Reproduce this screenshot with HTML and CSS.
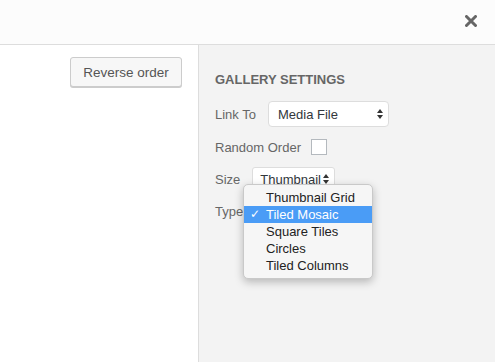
FILE: index.html
```html
<!DOCTYPE html>
<html lang="en">
<head>
	<meta charset="UTF-8">
	<title>Gallery settings</title>
	<link rel="stylesheet" href="styles.css">
</head>
<body>
	<div class="header">
		<button class="close" type="button">
			<svg width="12" height="12" viewBox="0 0 12 12"><path d="M1.5 1.5L10.5 10.5M10.5 1.5L1.5 10.5" stroke="#666" stroke-width="3" stroke-linecap="round"/></svg>
		</button>
	</div>

	<div class="main">
		<div class="content">
			<button class="btn" type="button">Reverse order</button>
		</div>

		<div class="sidebar">
			<h2 class="title">Gallery Settings</h2>

			<div class="row row-link">
				<span class="label">Link To</span>
				<div class="select select-link">Media File<span class="arrows"></span></div>
			</div>

			<div class="row row-random">
				<span class="label">Random Order</span>
				<span class="check"></span>
			</div>

			<div class="row row-size">
				<span class="label">Size</span>
				<div class="select select-size">Thumbnail<span class="arrows"></span></div>
			</div>

			<div class="row row-type">
				<span class="label">Type</span>
			</div>

			<ul class="menu">
				<li>Thumbnail Grid</li>
				<li class="active">Tiled Mosaic</li>
				<li>Square Tiles</li>
				<li>Circles</li>
				<li>Tiled Columns</li>
			</ul>
		</div>
	</div>
</body>
</html>
```

FILE: styles.css
```css
*{
	padding: 0;
	margin: 0;
	box-sizing: border-box;
	list-style: none;
}
html,body{
	height: 100%;
}
body{
	font-family: "Liberation Sans", Arial, sans-serif;
	font-size: 13px;
	color: #555;
	background: #fff;
	display: flex;
	flex-direction: column;
}
.header{
	height: 45px;
	background: #fcfcfc;
	border-bottom: 1px solid #ddd;
	display: flex;
	justify-content: flex-end;
	align-items: center;
	padding-right: 18px;
	flex-shrink: 0;
}
.close{
	border: 0;
	background: none;
	width: 12px;
	height: 12px;
	display: flex;
	margin-top: -3px;
}
.main{
	flex: 1;
	display: flex;
}
.content{
	width: 198px;
	display: flex;
	justify-content: flex-end;
	align-items: flex-start;
	padding: 12px 16px 0 0;
}
.btn{
	font-family: inherit;
	font-size: 13.5px;
	color: #555;
	width: 112px;
	height: 30px;
	background: #f7f7f7;
	border: 1px solid #ccc;
	border-radius: 3px;
	box-shadow: 0 1px 0 #ccc;
}
.sidebar{
	flex: 1;
	background: #f3f3f3;
	border-left: 1px solid #ddd;
	padding: 27px 16px 0 16px;
	position: relative;
}
.title{
	font-size: 13px;
	font-weight: bold;
	text-transform: uppercase;
	color: #666;
	line-height: 16px;
	margin-bottom: 13px;
}
.row{
	display: flex;
	align-items: center;
	color: #666;
}
.row-link{
	height: 26px;
	gap: 12px;
	margin-bottom: 12px;
}
.row-random{
	height: 16px;
	gap: 10px;
	margin-bottom: 12px;
}
.row-size{
	height: 24px;
	gap: 12px;
	margin-bottom: 10px;
}
.row-type{
	height: 20px;
}
.select{
	position: relative;
	background: #fff;
	border: 1px solid #ddd;
	border-radius: 4px;
	color: #32373c;
	display: flex;
	align-items: center;
	padding-left: 8px;
}
.select-link{
	width: 121px;
	height: 26px;
	padding-left: 9px;
}
.select-size{
	width: 83px;
	height: 24px;
	border-radius: 3px;
	padding-left: 7px;
}
.arrows{
	position: absolute;
	right: 4px;
	top: 50%;
	width: 7px;
	height: 10px;
	margin-top: -5px;
}
.arrows:before,
.arrows:after{
	content: "";
	position: absolute;
	left: 0;
	border-left: 3.5px solid transparent;
	border-right: 3.5px solid transparent;
}
.arrows:before{
	top: 0;
	border-bottom: 4px solid #333;
}
.arrows:after{
	bottom: 0;
	border-top: 4px solid #333;
}
.check{
	width: 16px;
	height: 16px;
	background: #fff;
	border: 1px solid #b4b9be;
}
.menu{
	position: absolute;
	left: 44px;
	top: 139px;
	width: 130px;
	padding: 4px 0 4px;
	background: #f6f6f6;
	border: 1px solid #c9c9c9;
	border-radius: 5px;
	box-shadow: 0 3px 8px rgba(0,0,0,0.25);
	color: #222;
}
.menu li{
	height: 17px;
	line-height: 17px;
	padding-left: 22px;
	position: relative;
}
.menu li.active{
	background: #4a9cf6;
	color: #fff;
}
.menu li.active:before{
	content: "\2713";
	position: absolute;
	left: 6px;
	top: 0;
	font-family: "DejaVu Sans", sans-serif;
	font-size: 12px;
	font-weight: bold;
}
```
